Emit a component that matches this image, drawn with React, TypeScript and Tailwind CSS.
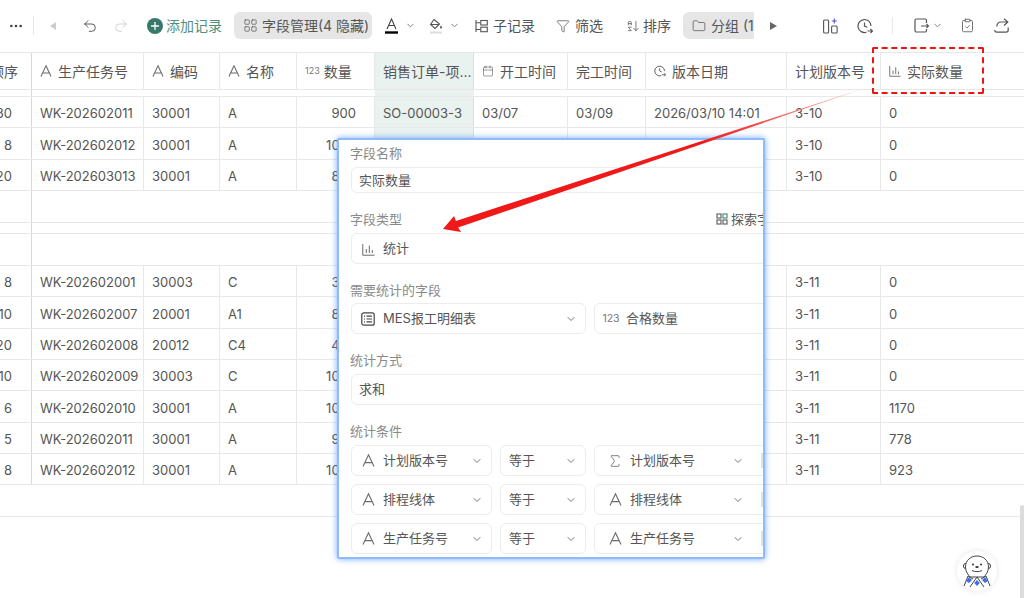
import { ChevronDown, Undo2, Redo2, Filter, ArrowDownAZ, Folder, LayoutGrid, Calendar, ClipboardCheck, Sigma, Ellipsis, Plus } from "lucide-react";

const font = "font-['Inter','Noto_Sans_CJK_SC',sans-serif]";

function TextIcon({ size = 12 }: { size?: number }) {
  return (
    <svg width={size} height={size} viewBox="0 0 13 13" fill="none" stroke="#6b6b6b" strokeWidth="1.1" className="shrink-0">
      <path d="M1 12.5 6.5.8 12 12.5M3 8.6h7" />
    </svg>
  );
}

function StatIcon({ size = 12 }: { size?: number }) {
  return (
    <svg width={size} height={size} viewBox="0 0 13 13" fill="none" stroke="#6b6b6b" strokeWidth="1" className="shrink-0">
      <path d="M.8 1v11.2h11.7M4.3 6v4M7.3 2.5V10M10.3 7v3" />
    </svg>
  );
}

function ClockPlus({ size = 16 }: { size?: number }) {
  return (
    <svg width={size} height={size} viewBox="0 0 16 16" fill="none" stroke="#555" strokeWidth="1.2" className="shrink-0">
      <path d="M14 8A6.5 6.5 0 1 0 9.5 14.2M7.5 4.5V8l2.8 1.2M10.5 13h5M13.5 11l2 2-2 2" />
    </svg>
  );
}

function TableIcon() {
  return (
    <svg width="14" height="14" viewBox="0 0 14 14" fill="none" stroke="#444" strokeWidth="1.2">
      <rect x=".8" y=".8" width="12.4" height="12.4" rx="2" />
      <path d="M3 4.2h1M3 7h1M3 9.8h1M5.5 4.2H11M5.5 7H11M5.5 9.8H11" />
    </svg>
  );
}

const columns = "grid grid-cols-[32px_112px_76px_77px_78px_99px_94px_78px_141px_94px_1fr]";
const cell = "flex items-center px-2 border-r border-[#e8e8e8] overflow-hidden whitespace-nowrap min-w-0";

const headers: [React.ReactNode, string][] = [
  [<TextIcon />, "生产任务号"],
  [<TextIcon />, "编码"],
  [<TextIcon />, "名称"],
  [<span className="text-[9px] text-[#777] -mr-[2px]">123</span>, "数量"],
  [null, "销售订单-项..."],
  [<Calendar size={12} strokeWidth={1.3} color="#666" />, "开工时间"],
  [null, "完工时间"],
  [<ClockPlus size={12} />, "版本日期"],
  [null, "计划版本号"],
  [<StatIcon />, "实际数量"],
];

const topRows = [
  ["30", "WK-202602011", "30001", "A", "900", "SO-00003-3", "03/07", "03/09", "2026/03/10 14:01", "3-10", "0"],
  ["8", "WK-202602012", "30001", "A", "1000", "", "", "", "", "3-10", "0"],
  ["20", "WK-202603013", "30001", "A", "800", "", "", "", "", "3-10", "0"],
];

const bottomRows = [
  ["8", "WK-202602001", "30003", "C", "300", "", "", "", "", "3-11", "0"],
  ["10", "WK-202602007", "20001", "A1", "800", "", "", "", "", "3-11", "0"],
  ["20", "WK-202602008", "20012", "C4", "400", "", "", "", "", "3-11", "0"],
  ["10", "WK-202602009", "30003", "C", "1000", "", "", "", "", "3-11", "0"],
  ["6", "WK-202602010", "30001", "A", "1000", "", "", "", "", "3-11", "1170"],
  ["5", "WK-202602011", "30001", "A", "900", "", "", "", "", "3-11", "778"],
  ["8", "WK-202602012", "30001", "A", "1000", "", "", "", "", "3-11", "923"],
];

function Row({ data }: { data: string[] }) {
  return (
    <div className={`${columns} h-[31.33px] border-b border-[#e8e8e8] text-[13px] text-[#555]`}>
      {data.map((v, i) => (
        <div
          key={i}
          className={`${cell} pt-[4px] ${i === 0 ? "justify-end pr-[19px] border-r-[#d8d8d8]" : ""} ${i === 4 ? "justify-end pr-[18px]" : ""} ${i === 5 ? "bg-[#e9f2ee] border-r-[#d5e3dc]" : ""} ${i === 10 ? "border-r-0" : ""}`}
        >
          {v}
        </div>
      ))}
    </div>
  );
}

function Blank({ h }: { h: string }) {
  return (
    <div className={`${h} flex border-b border-[#e8e8e8]`}>
      <div className="w-[32px] border-r border-[#d8d8d8]" />
    </div>
  );
}

function Label({ children }: { children: React.ReactNode }) {
  return <div className="h-[14px] -ml-px flex items-center text-[13px] leading-[14px] text-[#8a8a8a] whitespace-nowrap">{children}</div>;
}

function Select({ icon, text, className }: { icon?: React.ReactNode; text: string; className: string }) {
  return (
    <div className={`${className} h-[31px] shrink-0 flex items-center border border-[#ececec] rounded-md text-[13px] text-[#555]`}>
      {icon && <span className="w-[16px] mr-[7px] flex justify-center shrink-0">{icon}</span>}
      <span className="flex-1 whitespace-nowrap">{text}</span>
      <ChevronDown size={12} color="#777" />
    </div>
  );
}

function Field({ icon, text, className }: { icon?: React.ReactNode; text: string; className: string }) {
  return (
    <div className={`${className} w-[440px] flex items-center border border-[#ececec] rounded-md pl-[7px] pt-px text-[13px] text-[#555]`}>
      {icon && <span className="w-[16px] ml-px mr-[7px] flex justify-center">{icon}</span>}
      {text}
    </div>
  );
}

function ConditionRow({ a, c, sigma }: { a: string; c: string; sigma?: boolean }) {
  return (
    <div className="relative flex gap-2 items-center">
      <Select className="w-[141px] px-2" icon={<TextIcon size={13} />} text={a} />
      <Select className="w-[86px] px-2" text="等于" />
      <Select className="w-[200px] pl-3 pr-[49px]" icon={sigma ? <Sigma size={16} strokeWidth={1.2} color="#666" /> : <TextIcon size={13} />} text={c} />
      <div className="absolute left-[410px] top-[8px] h-[15px] w-[2px] bg-[#e2e2e2]" />
    </div>
  );
}

function Mascot() {
  return (
    <svg width="32" height="34" viewBox="0 0 32 34" fill="none" stroke="#444" strokeWidth="1">
      <circle cx="5" cy="12" r="2.6" fill="#fff" />
      <circle cx="27" cy="12" r="2.6" fill="#fff" />
      <path d="M4.5 13C4.5 6 10 2 16 2s11.500 4 11.500 11c0 5-3 8-4.500 10H9c-1.500-2-4.500-5-4.500-10Z" fill="#fff" />
      <circle cx="12" cy="10.500" r="1" fill="#333" stroke="none" />
      <circle cx="20" cy="10.500" r="1" fill="#333" stroke="none" />
      <ellipse cx="16" cy="13" rx="1.800" ry="1.100" fill="#333" stroke="none" />
      <path d="M11 16.500c2.500 1.500 7.500 1.500 10 0M3 32l4-10 5 3M29 32l-4-10-5 3M9 33l7-10 7 10" />
      <path d="M5 27l3-4 3 3-3 3ZM27 27l-3-4-3 3 3 3ZM16 26l2.800 3-2.800 3-2.800-3Z" fill="#3f72e0" stroke="none" />
    </svg>
  );
}

export default function App() {
  return (
    <div className={`relative w-[1024px] h-[598px] overflow-hidden bg-white ${font}`}>
      {/* toolbar */}
      <div className="h-[52px] pb-px flex items-center text-[14px] text-[#555] whitespace-nowrap overflow-hidden">
        <Ellipsis size={16} color="#444" className="ml-[8px] shrink-0" />
        <div className="w-px h-[19px] bg-[#e8e8e8] ml-[9px] shrink-0" />
        <svg width="7" height="8" viewBox="0 0 7 8" className="ml-[16px] shrink-0"><path d="M6 0v8L0 4Z" fill="#ccc" /></svg>
        <Undo2 size={16} strokeWidth={1.3} color="#444" className="ml-[25px] shrink-0" />
        <Redo2 size={16} strokeWidth={1.3} color="#ccc" className="ml-[15px] shrink-0" />
        <span className="ml-[18px] w-[16px] h-[16px] shrink-0 rounded-full bg-[#37796a] flex items-center justify-center"><Plus size={12} strokeWidth={2.6} color="#fff" /></span>
        <span className="ml-[3px] w-[56px] shrink-0 text-[#4f8f80]">添加记录</span>
        <div className="ml-[12px] h-[27px] w-[138px] shrink-0 rounded-md bg-[#e6e6e6] flex items-center pl-[9px] gap-[4px] overflow-hidden">
          <LayoutGrid size={15} strokeWidth={1.2} color="#555" className="shrink-0" />
          <span>字段管理(4 隐藏)</span>
        </div>
        <svg width="13" height="16" viewBox="0 0 13 16" fill="none" stroke="#444" strokeWidth="1.1" className="ml-[13px] shrink-0">
          <path d="M2 11 6.500 1 11 11M3.500 7.500h6" />
          <path d="M0 14.500h13" stroke="#000" strokeWidth="2.400" />
        </svg>
        <ChevronDown size={11} color="#777" className="ml-[7px] shrink-0" />
        <svg width="14" height="16" viewBox="0 0 14 16" fill="none" stroke="#555" strokeWidth="1.1" className="ml-[13px] shrink-0">
          <path d="M5 1.500 10.500 6 6 10.500 1.500 6.500ZM1.500 6.500h9" />
          <path d="M12 7.500c.8 1 1 1.500 1 2a1 1 0 0 1-2 0c0-.5.200-1 1-2Z" fill="#555" stroke="none" />
          <path d="M1 14.500h12" stroke="#ddd" strokeWidth="2" />
        </svg>
        <ChevronDown size={11} color="#777" className="ml-[6px] shrink-0" />
        <svg width="13" height="14" viewBox="0 0 13 14" fill="none" stroke="#555" strokeWidth="1.1" className="ml-[15px] shrink-0">
          <path d="M1 1v12M1 3.800h4.500M1 10.500h4.500" />
          <rect x="5.800" y="1.500" width="6.500" height="4.500" />
          <rect x="5.800" y="8.200" width="6.500" height="4.500" />
        </svg>
        <span className="ml-[5px] w-[42px] shrink-0">子记录</span>
        <Filter size={14} strokeWidth={1.3} color="#555" className="ml-[21px] shrink-0" />
        <span className="ml-[5px] w-[28px] shrink-0">筛选</span>
        <ArrowDownAZ size={14} strokeWidth={1.3} color="#555" className="ml-[23px] shrink-0 -scale-x-100" />
        <span className="ml-[3px] w-[28px] shrink-0">排序</span>
        <div className="ml-[12px] h-[27px] w-[71px] shrink-0 rounded-l-md bg-[#e6e6e6] flex items-center pl-[9px] gap-[5px] overflow-hidden">
          <Folder size={14} strokeWidth={1.3} color="#555" className="shrink-0" />
          <span>分组 (1</span>
        </div>
        <svg width="7" height="8" viewBox="0 0 7 8" className="ml-[16px] shrink-0"><path d="M0 0v8l7-4Z" fill="#666" /></svg>
        <svg width="15" height="16" viewBox="0 0 15 16" fill="none" stroke="#555" strokeWidth="1.1" className="ml-[46px] shrink-0">
          <rect x=".6" y="2" width="5" height="13" rx="1" />
          <rect x="8.600" y="8" width="5.500" height="7" rx="1" />
          <path d="M11.300 .5v5M8.800 3h5" stroke="#5a4fe0" />
        </svg>
        <span className="ml-[19px] shrink-0"><ClockPlus /></span>
        <div className="w-px h-[17px] bg-[#e8e8e8] ml-[19px] shrink-0" />
        <svg width="15" height="15" viewBox="0 0 15 15" fill="none" stroke="#555" strokeWidth="1.2" className="ml-[21px] shrink-0">
          <path d="M12.500 5V2.500A1.500 1.500 0 0 0 11 1H2.500A1.500 1.500 0 0 0 1 2.500v10A1.500 1.500 0 0 0 2.500 14H11a1.500 1.500 0 0 0 1.500-1.500V11M7 8h7.500M12.500 6l2 2-2 2" />
        </svg>
        <ChevronDown size={11} color="#777" className="ml-[3px] shrink-0" />
        <ClipboardCheck size={15} strokeWidth={1.3} color="#555" className="ml-[17px] shrink-0" />
        <svg width="15" height="15" viewBox="0 0 15 15" fill="none" stroke="#555" strokeWidth="1.2" className="ml-[19px] shrink-0">
          <path d="M10 .8 13.800 4 10 7.500M13.800 4H7C4.500 4 3 6 2.800 8.500M.8 12c0 1.500.8 2.200 2 2.200h9.400c1.200 0 2-.7 2-2.200V9.500" />
        </svg>
      </div>

      {/* table */}
      <div className={`${columns} h-[38px] border-y border-[#e8e8e8] text-[14px] text-[#555]`}>
        <div className={`${cell} justify-end pr-[13px] border-r-[#d8d8d8]`}>顺序</div>
        {headers.map(([icon, label], i) => (
          <div key={label} className={`${cell} gap-[6px] ${i === 4 ? "bg-[#e9f2ee] border-r-[#d5e3dc] pr-0" : ""} ${i === 9 ? "border-r-0" : ""}`}>
            {icon}
            {label}
          </div>
        ))}
      </div>
      <div className={`${columns} h-[7px] border-b border-[#e8e8e8]`}>
        <div className="border-r border-[#d8d8d8]" />
        <div className="col-span-4" />
        <div className="bg-[#e9f2ee]" />
      </div>
      {topRows.map((r) => <Row key={r[1]} data={r} />)}
      <Blank h="h-[32px]" />
      <Blank h="h-[11px]" />
      <Blank h="h-[32px]" />
      {bottomRows.map((r) => <Row key={r[1] + r[0]} data={r} />)}
      <div className="h-[32px] border-b border-[#e8e8e8]" />

      {/* scrollbar */}
      <div className="absolute right-0 top-[505px] h-[93px] w-[4px] rounded-t bg-[#dcdcdc]" />

      {/* mascot */}
      <div className="absolute left-[957px] top-[551px] w-[40px] h-[40px] rounded-full bg-white shadow-[0_0_6px_rgba(0,0,0,0.1)] flex items-center justify-center">
        <Mascot />
      </div>

      {/* field dialog */}
      <div className="absolute left-[337px] top-[138px] w-[428px] h-[421px] bg-white border-2 border-[#8fbafc] shadow-[0_0_6px_rgba(70,140,255,0.75)] rounded-[2px] overflow-hidden pl-[12px] pt-[6px]">
        <div className="flex flex-col">
          <Label>字段名称</Label>
          <Field className="h-[26px] mt-[7px]" text="实际数量" />
          <div className="mt-[19px] flex items-center relative">
            <Label>字段类型</Label>
            <span className="absolute left-[365px] flex items-center gap-[3px] text-[13px] leading-[14px] text-[#555] whitespace-nowrap">
              <svg width="12" height="12" viewBox="0 0 12 12" fill="none" stroke="#666" strokeWidth="1.2">
                <rect x="1" y="1" width="4" height="4" />
                <rect x="7" y="7" width="4" height="4" />
                <rect x="1" y="7" width="4" height="4" />
                <rect x="7" y="1" width="4" height="4" stroke="#4f8f80" />
              </svg>
              探索字段
            </span>
          </div>
          <Field className="h-[31px] mt-[7px]" icon={<StatIcon size={13} />} text="统计" />
          <div className="mt-[19px]"><Label>需要统计的字段</Label></div>
          <div className="flex gap-2 mt-[6px]">
            <Select className="w-[235px] px-2" icon={<TableIcon />} text="MES报工明细表" />
            <Select className="w-[200px] px-2" icon={<span className="text-[10.5px] text-[#777]">123</span>} text="合格数量" />
          </div>
          <div className="mt-[19px]"><Label>统计方式</Label></div>
          <Field className="h-[31px] mt-[7px]" text="求和" />
          <div className="mt-[19px]"><Label>统计条件</Label></div>
          <div className="flex flex-col gap-2 mt-[7px]">
            <ConditionRow a="计划版本号" c="计划版本号" sigma />
            <ConditionRow a="排程线体" c="排程线体" />
            <ConditionRow a="生产任务号" c="生产任务号" />
          </div>
        </div>
      </div>

      {/* annotation */}
      <div className="absolute left-[872px] top-[47px] w-[112px] h-[47px] rounded-[2px] border-2 border-dashed border-[#f01414]" />
      <svg className="absolute left-0 top-0 pointer-events-none" width="1024" height="598" viewBox="0 0 1024 598">
        <defs>
          <linearGradient id="tail" x1="865" y1="88" x2="700" y2="146" gradientUnits="userSpaceOnUse">
            <stop offset="0" stopColor="#f5b0b0" />
            <stop offset="1" stopColor="#f01818" />
          </linearGradient>
        </defs>
        <path d="M865 88 L458.100 227.500 L461 232 L443 229 L454 216 L455.900 220.900 Z" fill="url(#tail)" />
      </svg>
    </div>
  );
}
